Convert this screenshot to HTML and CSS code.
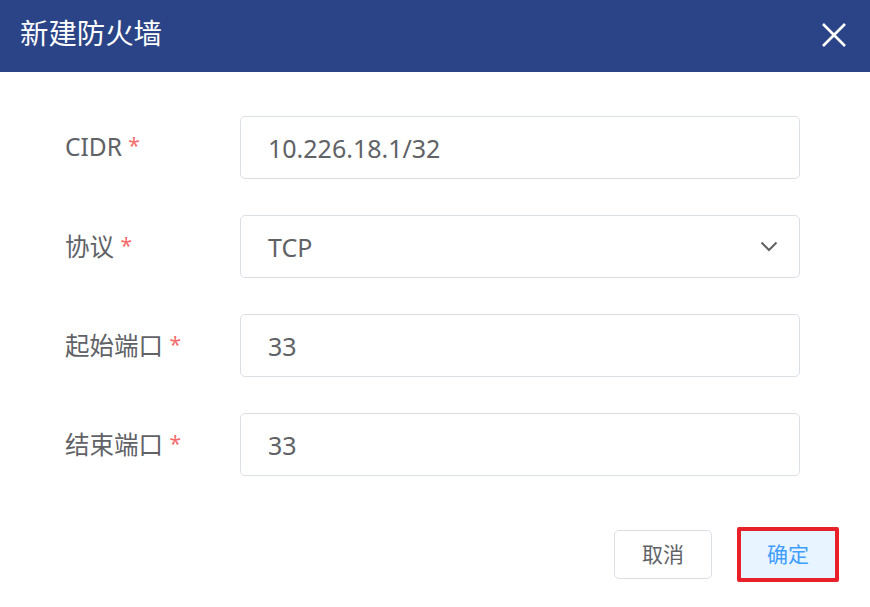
FILE: index.html
```html
<!DOCTYPE html>
<html>
<head>
<meta charset="utf-8">
<link rel="stylesheet" href="styles.css">
</head>
<body>
<div class="dialog">
  <div class="header">
    <span class="title">新建防火墙</span>
    <svg class="close" width="26" height="26" viewBox="0 0 26 26"><path d="M2 2 L24 24 M24 2 L2 24" stroke="#fff" stroke-width="2.6" fill="none"/></svg>
  </div>
  <div class="form">
    <div class="row">
      <label class="label">CIDR <span class="req">*</span></label>
      <div class="input">10.226.18.1/32</div>
    </div>
    <div class="row">
      <label class="label">协议 <span class="req">*</span></label>
      <div class="input select">TCP
        <svg class="arrow" width="18" height="11" viewBox="0 0 18 11"><path d="M1.5 1.5 L9 9 L16.5 1.5" stroke="#606266" stroke-width="2" fill="none"/></svg>
      </div>
    </div>
    <div class="row">
      <label class="label">起始端口 <span class="req">*</span></label>
      <div class="input">33</div>
    </div>
    <div class="row">
      <label class="label">结束端口 <span class="req">*</span></label>
      <div class="input">33</div>
    </div>
  </div>
  <div class="footer">
    <button class="btn cancel">取消</button>
    <button class="btn ok">确定</button>
  </div>
</div>
</body>
</html>
```
FILE: styles.css
```css
* { box-sizing: border-box; }
body {
  margin: 0;
  background: #fff;
  font-family: "Noto Sans", "Noto Sans CJK SC", sans-serif;
}
.header {
  height: 72px;
  background: #2a4487;
  display: flex;
  align-items: center;
  justify-content: space-between;
  padding: 0 23px 0 20px;
}
.title {
  color: #fff;
  font-size: 28.4px;
  font-family: "Noto Sans CJK SC", sans-serif;
  line-height: 1;
  margin-top: -8px;
}
.close { margin-top: -2px; }
.form {
  padding: 44px 70px 0 65px;
  display: flex;
  flex-direction: column;
  gap: 36px;
}
.row {
  display: flex;
  align-items: center;
  height: 63px;
}
.label {
  width: 175px;
  font-size: 24.5px;
  color: #606266;
  font-family: "Noto Sans", "Noto Sans CJK SC", sans-serif;
  margin-top: -2px;
}
.req {
  color: #f56c6c;
  font-size: 21px;
  vertical-align: 3px;
}
.input {
  flex: 1;
  height: 63px;
  border: 1px solid #dcdfe6;
  border-radius: 5px;
  padding: 0 27px;
  display: flex;
  align-items: center;
  font-size: 25px;
  color: #606266;
}
.select { justify-content: space-between; padding-right: 21px; }
.footer {
  display: flex;
  justify-content: flex-end;
  align-items: center;
  gap: 25px;
  padding: 51px 31px 0 0;
}
.btn {
  font-family: "Noto Sans CJK SC", sans-serif;
  font-size: 21px;
  line-height: 1;
  border-radius: 5px;
  cursor: pointer;
  padding: 0 0 3px;
}
.cancel {
  width: 98px;
  height: 49px;
  background: #fff;
  border: 1px solid #dcdfe6;
  color: #606266;
}
.ok {
  width: 102px;
  height: 55px;
  background: #e8f4ff;
  border: 4px solid #e8202a;
  border-radius: 2px;
  color: #409eff;
}
```
